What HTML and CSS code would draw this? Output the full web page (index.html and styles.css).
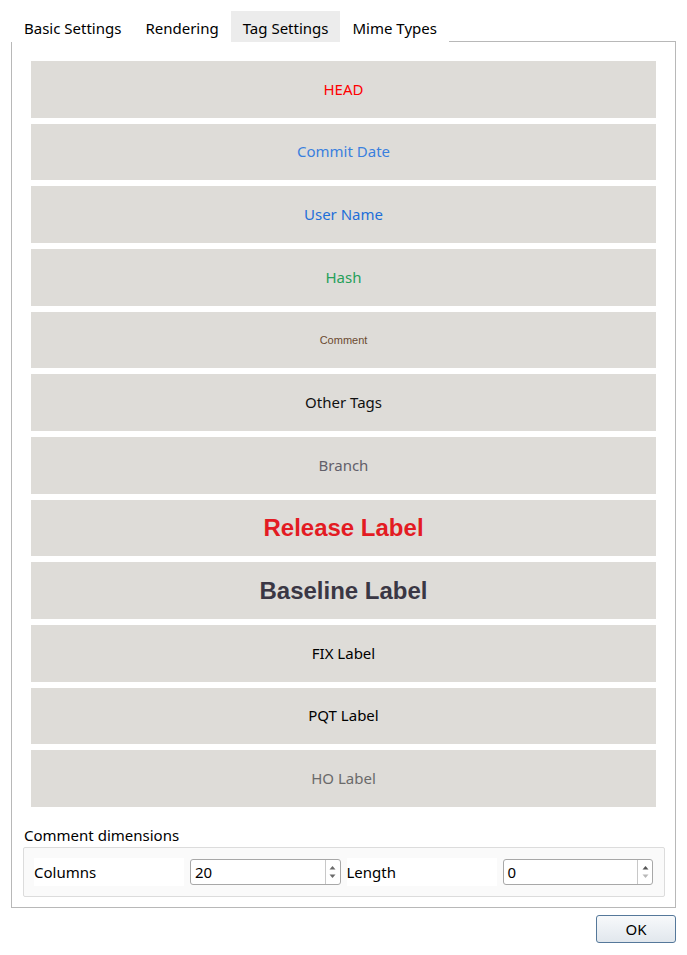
FILE: index.html
```html
<!DOCTYPE html>
<html>
<head>
<meta charset="utf-8">
<link rel="stylesheet" href="styles.css">
</head>
<body>
<div class="dialog">
  <div class="tabbar">
    <div class="tab">Basic Settings</div>
    <div class="tab">Rendering</div>
    <div class="tab active">Tag Settings</div>
    <div class="tab">Mime Types</div>
    <div class="tab-fill"></div>
  </div>
  <div class="pane">
    <div class="tags">
      <div class="tagbtn c-head">HEAD</div>
      <div class="tagbtn c-date">Commit Date</div>
      <div class="tagbtn c-user">User Name</div>
      <div class="tagbtn c-hash">Hash</div>
      <div class="tagbtn c-comment">Comment</div>
      <div class="tagbtn c-other">Other Tags</div>
      <div class="tagbtn c-branch">Branch</div>
      <div class="tagbtn c-release">Release Label</div>
      <div class="tagbtn c-baseline">Baseline Label</div>
      <div class="tagbtn c-fix">FIX Label</div>
      <div class="tagbtn c-pqt">PQT Label</div>
      <div class="tagbtn c-ho">HO Label</div>
    </div>
    <div class="group-title">Comment dimensions</div>
    <div class="group">
      <div class="field-label">Columns</div>
      <div class="spin">
        <span class="spin-val">20</span>
        <span class="spin-arrows">
          <svg width="9" height="18" viewBox="0 0 9 18"><path d="M1.5 6.5 L4.5 3 L7.5 6.5 Z" fill="#6a6a6a"/><path d="M1.5 11.5 L4.5 15 L7.5 11.5 Z" fill="#6a6a6a"/></svg>
        </span>
      </div>
      <div class="field-label">Length</div>
      <div class="spin">
        <span class="spin-val">0</span>
        <span class="spin-arrows">
          <svg width="9" height="18" viewBox="0 0 9 18"><path d="M1.5 6.5 L4.5 3 L7.5 6.5 Z" fill="#555"/><path d="M1.5 11.5 L4.5 15 L7.5 11.5 Z" fill="#b8b8b8"/></svg>
        </span>
      </div>
    </div>
  </div>
  <div class="footer">
    <div class="okbtn">OK</div>
  </div>
</div>
</body>
</html>
```

FILE: styles.css
```css
html, body {
  margin: 0;
  padding: 0;
  background: #ffffff;
}
body {
  font-family: "Noto Sans", "Open Sans", sans-serif;
  font-size: 15px;
  color: #000;
}
.dialog {
  padding: 11px 11px 0 11px;
}
.tabbar {
  display: flex;
  height: 31px;
  padding-left: 1px;
}
.tab {
  display: flex;
  align-items: center;
  padding: 2px 12px 0 12px;
  height: 31px;
  box-sizing: border-box;
}
.tab.active {
  background: #ececec;
}
.tab-fill {
  flex: 1;
  border-bottom: 1px solid #b8b8b8;
  height: 30px;
}
.pane {
  border: 1px solid #b8b8b8;
  border-top: none;
  padding: 19px 19px 10px 19px;
  height: 866px;
  box-sizing: border-box;
  display: flex;
  flex-direction: column;
}
.tags {
  display: grid;
  grid-template-rows: repeat(12, 1fr);
  row-gap: 6px;
  height: 746px;
}
.tagbtn {
  background: #dedcd8;
  display: flex;
  align-items: center;
  justify-content: center;
  font-size: 15px;
  padding-bottom: 1px;
}
.c-head { color: #ff0000; }
.c-date { color: #3a80de; }
.c-user { color: #1e6fd8; }
.c-hash { color: #26a05a; }
.c-comment { color: #6b4a30; font-family: "Liberation Sans", Arial, sans-serif; font-size: 11px; padding-bottom: 0; padding-top: 1px; }
.c-other { color: #111; }
.c-branch { color: #62606a; }
.c-release { color: #e31b23; font-family: "Liberation Sans", Arial, sans-serif; font-weight: bold; font-size: 24px; padding-bottom: 0; padding-top: 1px; }
.c-baseline { color: #3a3744; font-family: "Liberation Sans", Arial, sans-serif; font-weight: bold; font-size: 24px; padding-bottom: 0; padding-top: 1px; }
.c-fix { color: #000; }
.c-pqt { color: #000; }
.c-ho { color: #6a6a6a; }
.group-title {
  margin: 17px -8px 0 -8px;
  line-height: 22px;
  height: 22px;
  padding-left: 1px;
}
.group {
  margin: 1px -9px 0 -8px;
  height: 50px;
  box-sizing: border-box;
  border: 1px solid #dcdcdc;
  border-radius: 2px;
  background: #fafafa;
  display: flex;
  align-items: center;
  padding: 0 11px 0 10px;
  gap: 6px;
}
.field-label {
  width: 150px;
  height: 28px;
  background: #ffffff;
  display: flex;
  align-items: center;
}
.spin {
  flex: 1;
  height: 26px;
  box-sizing: border-box;
  border: 1px solid #a8a8a8;
  border-radius: 3px;
  background: #fff;
  display: flex;
  align-items: stretch;
}
.spin-val {
  flex: 1;
  display: flex;
  align-items: center;
  padding-left: 4px;
}
.spin-arrows {
  width: 14px;
  border-left: 1px solid #c8c8c8;
  display: flex;
  align-items: center;
  justify-content: center;
}
.footer {
  display: flex;
  justify-content: flex-end;
  padding-top: 7px;
}
.okbtn {
  width: 80px;
  height: 28px;
  box-sizing: border-box;
  border: 1px solid #55789a;
  border-radius: 3px;
  background: linear-gradient(#f7f9fb, #e1e7ed);
  display: flex;
  align-items: center;
  justify-content: center;
}
```
